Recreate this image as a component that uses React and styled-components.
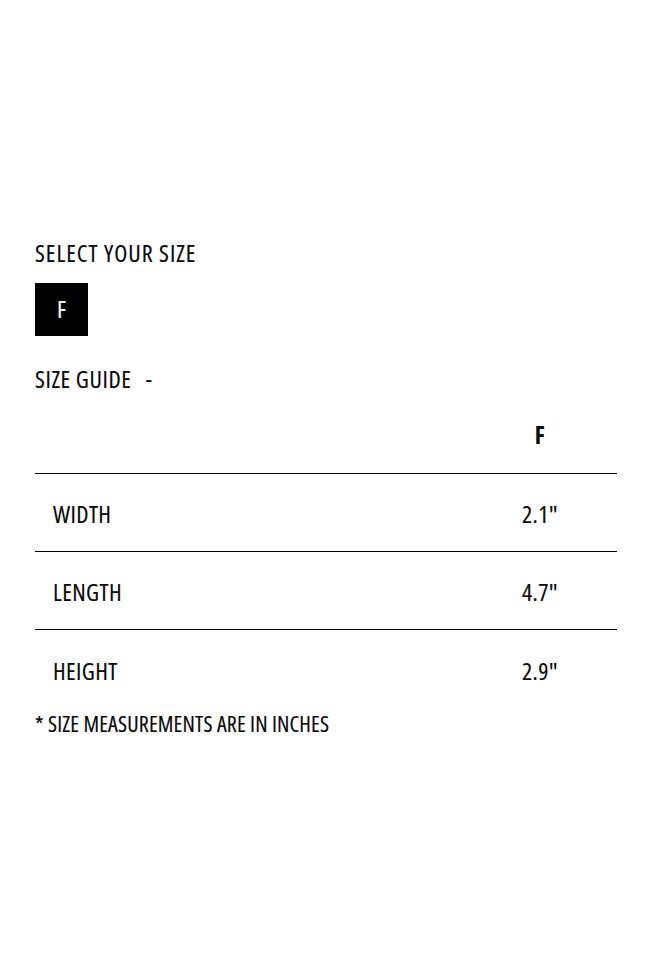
import React from "react";
import styled, { createGlobalStyle } from "styled-components";

const GlobalStyle = createGlobalStyle`
  html, body { margin: 0; padding: 0; background: #fff; }
  body {
    font-family: "Open Sans", "Liberation Sans", sans-serif;
    font-stretch: condensed;
    color: #0a0a0a;
    -webkit-text-stroke: 0.15px currentColor;
  }
`;

const Page = styled.div`
  width: 650px;
  box-sizing: border-box;
  padding: 238px 33px 0 35px;
`;

const Heading = styled.h2`
  margin: 0;
  font-size: 24px;
  line-height: 30px;
  font-weight: 400;
  letter-spacing: 1px;
  text-transform: uppercase;
`;

const SizeList = styled.div`
  display: flex;
  gap: 10px;
  margin-top: 15px;
`;

const SizeButton = styled.button`
  width: 53px;
  height: 53px;
  border: none;
  padding: 0 0 2px;
  background: ${(p) => (p.$active ? "#000" : "#fff")};
  color: ${(p) => (p.$active ? "#fff" : "#000")};
  font-family: inherit;
  font-stretch: condensed;
  font-size: 24px;
  font-weight: 400;
  -webkit-text-stroke: 0.15px currentColor;
  cursor: pointer;
`;

const GuideTitle = styled.div`
  margin-top: 28px;
  font-size: 24px;
  line-height: 30px;
  letter-spacing: 0.6px;
  display: flex;
  gap: 14px;
`;

const Table = styled.div`
  display: grid;
  grid-template-columns: 1fr 154px;
  margin-top: 2px;
`;

const Cell = styled.div`
  display: flex;
  align-items: center;
  justify-content: ${(p) => (p.$value ? "center" : "flex-start")};
  height: 78px;
  box-sizing: border-box;
  padding-top: ${(p) => (p.$head ? "0" : "3px")};
  padding-left: ${(p) => (p.$value ? "0" : "18px")};
  border-bottom: ${(p) => (p.$last ? "none" : "1px solid #000")};
  font-size: 24px;
  line-height: 30px;
  font-weight: ${(p) => (p.$head ? 700 : 400)};
  letter-spacing: 0.4px;
`;

const Note = styled.p`
  margin: 0;
  font-size: 22px;
  line-height: 30px;
  letter-spacing: 0.15px;
`;

const rows = [
  ["WIDTH", '2.1"'],
  ["LENGTH", '4.7"'],
  ["HEIGHT", '2.9"'],
];

export default function App() {
  return (
    <Page>
      <GlobalStyle />
      <Heading>Select your size</Heading>
      <SizeList>
        <SizeButton $active>F</SizeButton>
      </SizeList>
      <GuideTitle>
        <span>SIZE GUIDE</span>
        <span>-</span>
      </GuideTitle>
      <Table>
        <Cell $head />
        <Cell $head $value>F</Cell>
        {rows.map(([label, value], i) => (
          <React.Fragment key={label}>
            <Cell $last={i === rows.length - 1}>{label}</Cell>
            <Cell $value $last={i === rows.length - 1}>{value}</Cell>
          </React.Fragment>
        ))}
      </Table>
      <Note>* SIZE MEASUREMENTS ARE IN INCHES</Note>
    </Page>
  );
}
